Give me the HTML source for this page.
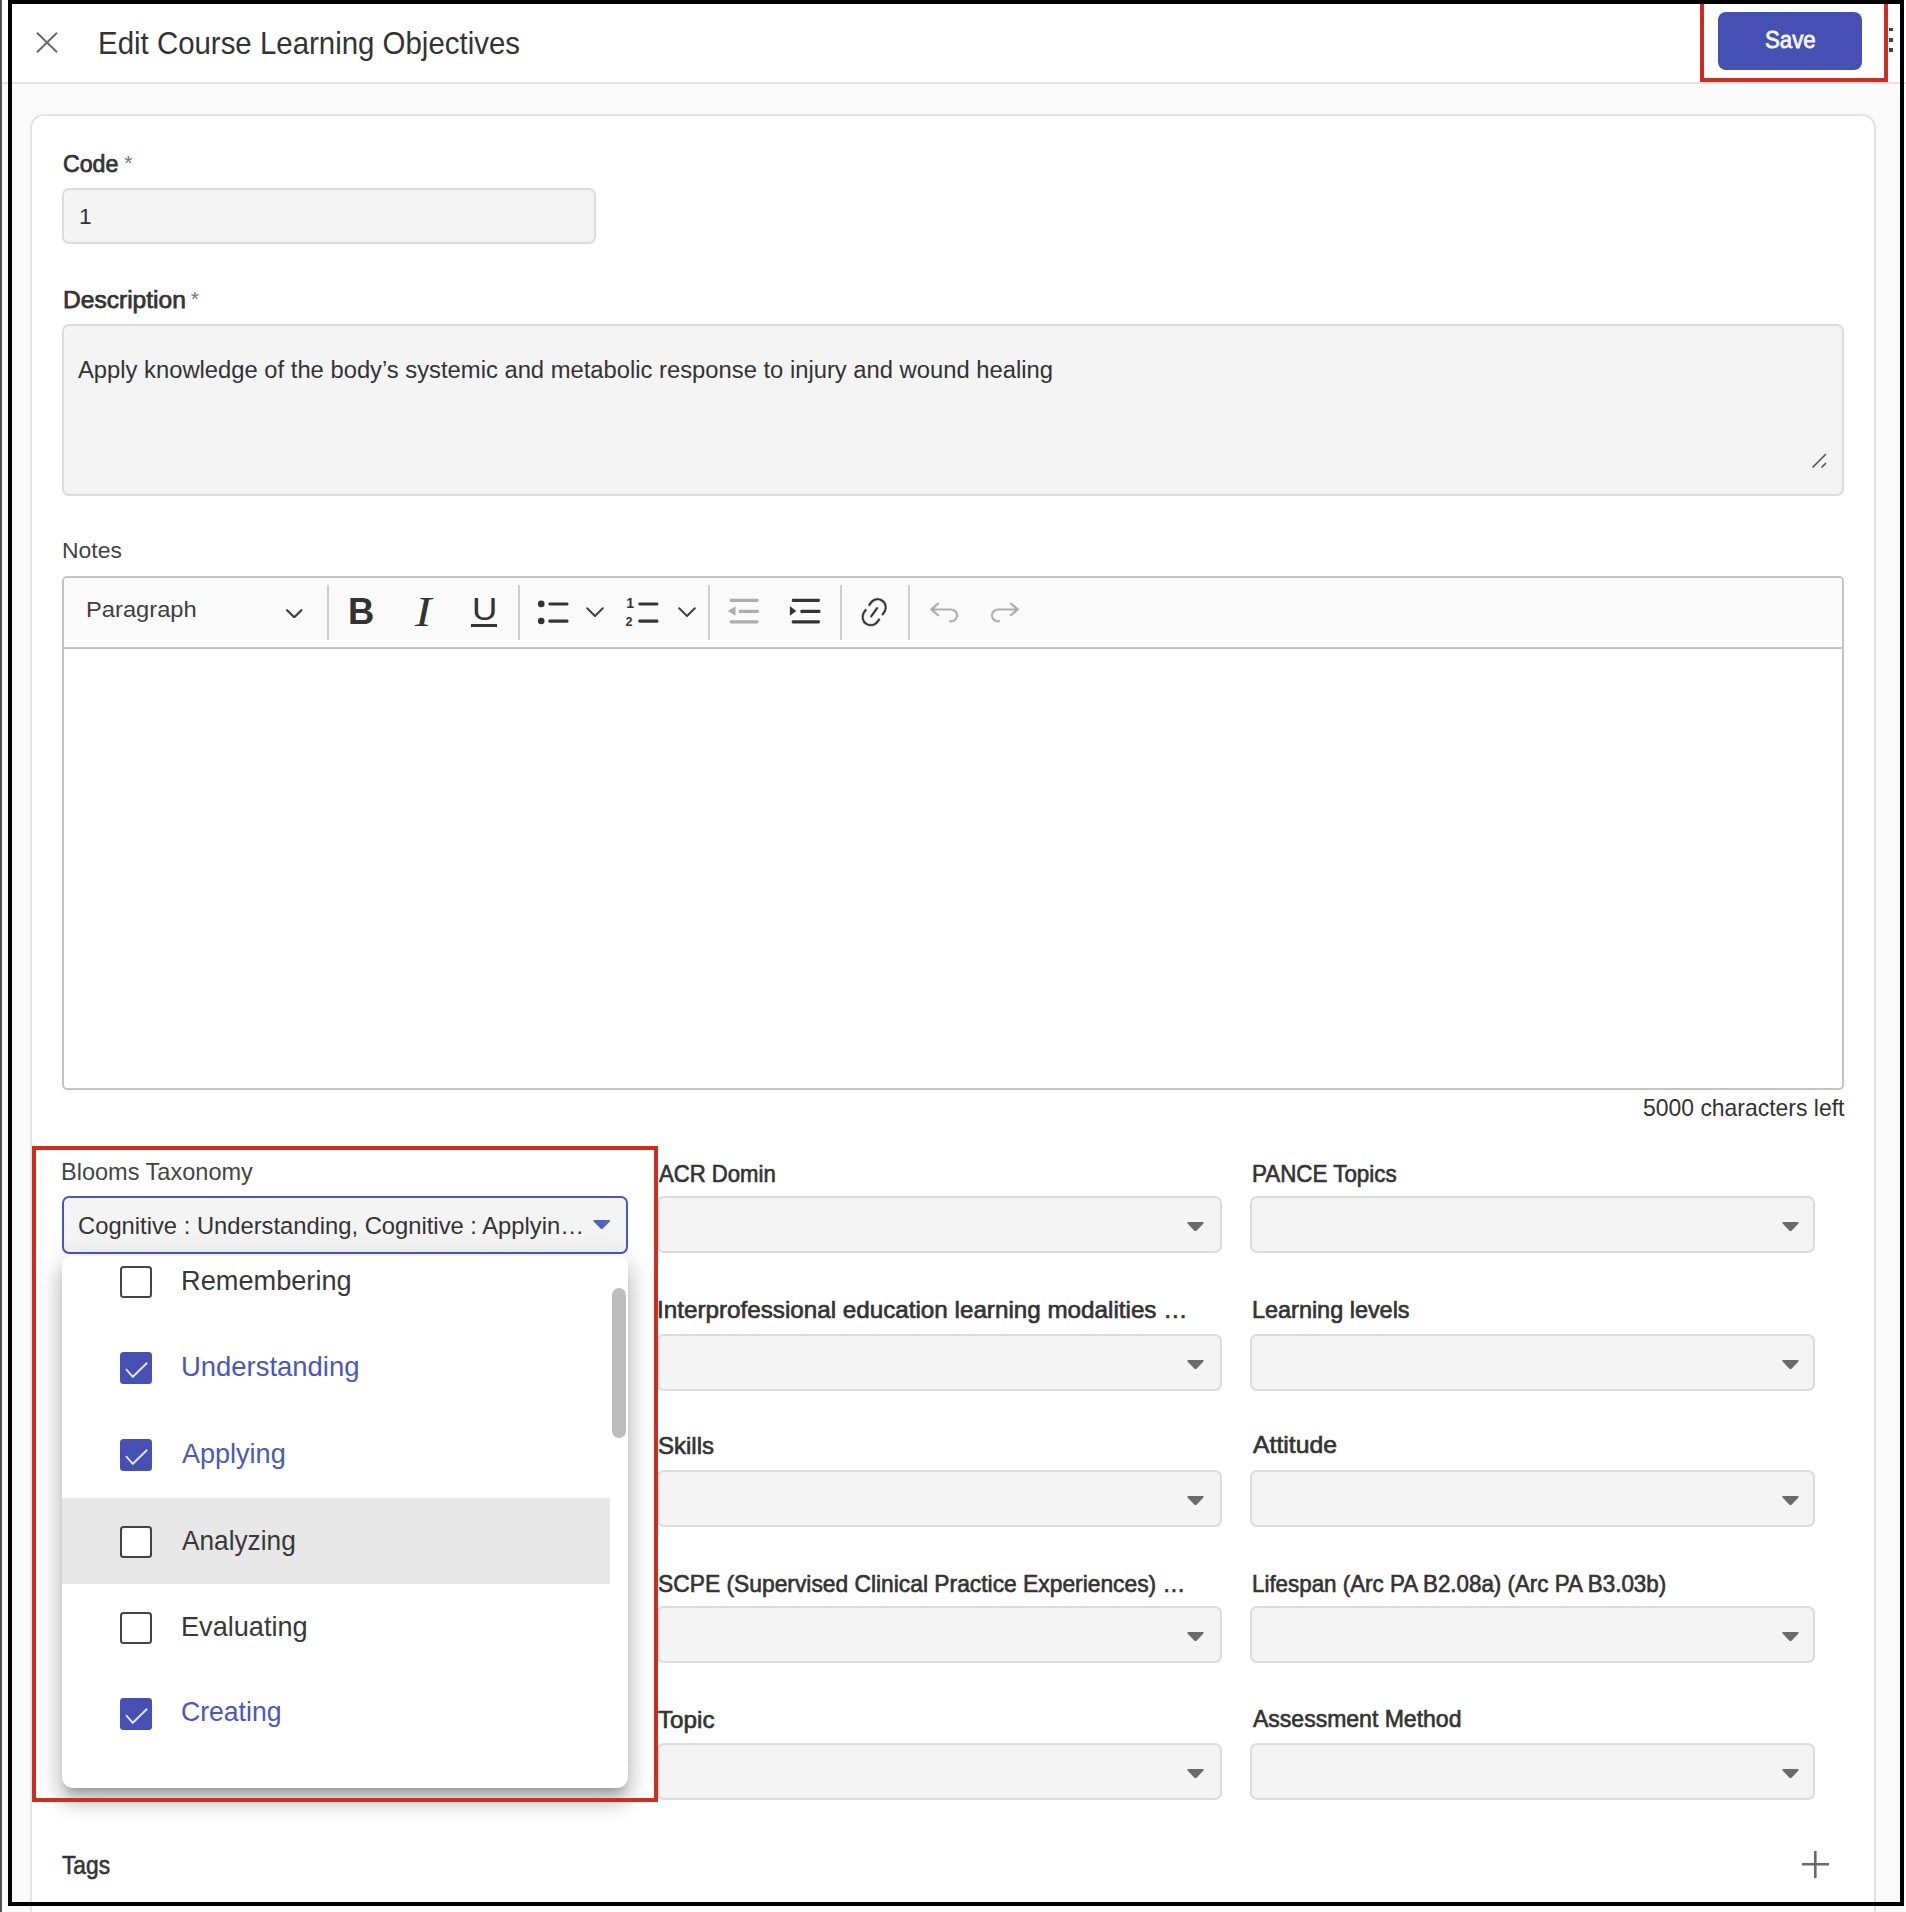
<!DOCTYPE html>
<html lang="en">
<head>
<meta charset="utf-8">
<title>Edit Course Learning Objectives</title>
<style>
html,body{margin:0;padding:0}
body{width:1906px;height:1912px;position:relative;overflow:hidden;background:#fff;font-family:"Liberation Sans", Arial, sans-serif;color:#333}
.abs,.t,.ic,.sep,.sel,.arr,.cb,.hl{position:absolute}
.t{white-space:nowrap;line-height:1;display:block;transform-origin:0 0}
.strip{left:0;top:0;width:2.5px;height:1912px;background:linear-gradient(90deg,#4a4a4a,#6a6a6a)}
.header{left:2px;top:0;width:1904px;height:81.5px;background:#fff;border-bottom:2px solid #e3e3e3}
.content{left:2px;top:83.5px;width:1904px;height:1829px;background:#fafafa}
.card{left:30px;top:114px;width:1842px;height:1900px;background:#fff;border:2px solid #e3e3e3;border-radius:14px}
.btn{left:1718px;top:12px;width:144px;height:58px;background:#4650b2;border-radius:8px}
.dot{width:3.5px;height:3.5px;background:#444;left:1889.4px}
.inp{background:#f4f4f4;border:2px solid #dcdcdc;border-radius:7px;box-sizing:border-box}
.editor{left:62px;top:576px;width:1782px;height:514px;box-sizing:border-box;border:2px solid #c4c4c4;border-radius:5px;background:#fff}
.toolbar{left:0;top:0;width:1778px;height:68.5px;background:#fafafa;border-bottom:2px solid #c4c4c4;border-radius:3px 3px 0 0}
.ic{fill:#333}
.ic.dis{fill:#333;opacity:.38}
.ic.thin{stroke:#fafafa;stroke-width:.35px;paint-order:fill stroke}
.sep{top:584.5px;width:2px;height:55px;background:#cfcfcf}
.sel{width:565px;height:57px;background:#f4f4f4;border:2px solid #dcdcdc;border-radius:7px;box-sizing:border-box}
.arr{fill:#6a6a6a}
.sel.focus{left:62px;top:1196px;width:566px;height:58px;border:2px solid #4a58be;border-radius:7px}
.panel{left:62px;top:1256px;width:566px;height:532px;background:#fff;border-radius:9px 9px 11px 11px;overflow:hidden;
 box-shadow:0 9px 10px -5px rgba(0,0,0,.22),0 15px 19px 2px rgba(0,0,0,.15),0 6px 27px 4px rgba(0,0,0,.13)}
.panelshadow{left:62px;top:1256px;width:566px;height:532px;border-radius:9px 9px 11px 11px}
.hl{left:0;width:548px;height:85.5px;background:#e7e7e7}
.cb{left:58px;width:32px;height:32px;box-sizing:border-box;border:2px solid #444;border-radius:3.5px;background:#fff}
.cb.on{border:0;background:#4650b2}
.cb svg{display:block}
.thumb{left:550px;top:31.5px;width:14px;height:150px;border-radius:7px;background:#bdbdbd}
.red{border:4px solid #d32b1f;box-sizing:border-box}
.frame{left:8px;top:0;width:1896px;height:1906px;box-sizing:border-box;border:4px solid #000}
</style>
</head>
<body>
<div class="abs strip"></div>
<header class="abs header"></header>
<main class="abs content"></main>
<section class="abs card"></section>

<!-- header -->
<svg class="abs" style="left:34px;top:29px" width="26" height="26" viewBox="0 0 26 26"><path d="M3 3.8L23 23.3M23 3.8L3 23.3" stroke="#666" stroke-width="1.9" fill="none"/></svg>
<span class="t" style="left:97.8px;top:27.9px;font-size:31.2px;transform:scaleX(0.9435);">Edit Course Learning Objectives</span>
<div class="abs btn"></div><span class="t" style="left:1765.4px;top:27.7px;font-size:24.6px;color:#f4f5fc;transform:scaleX(0.9043);-webkit-text-stroke:0.8px currentColor;">Save</span>
<i class="abs dot" style="top:27.6px"></i><i class="abs dot" style="top:38px"></i><i class="abs dot" style="top:48.2px"></i>

<!-- code -->
<span class="t" style="left:63.1px;top:151.7px;font-size:24.2px;transform:scaleX(0.9581);-webkit-text-stroke:0.75px currentColor;">Code</span><span class="t" style="left:124.3px;top:151.6px;font-size:21px;color:#777;">*</span>
<div class="abs inp" style="left:62px;top:188px;width:534px;height:56px"></div><span class="t" style="left:79.1px;top:206.2px;font-size:22.6px;">1</span>

<!-- description -->
<span class="t" style="left:62.6px;top:287.7px;font-size:24.2px;transform:scaleX(1.0158);-webkit-text-stroke:0.75px currentColor;">Description</span><span class="t" style="left:190.8px;top:287.6px;font-size:21px;color:#777;">*</span>
<div class="abs inp" style="left:62px;top:324px;width:1782px;height:171.6px"></div><span class="t" style="left:78.2px;top:359.1px;font-size:23.5px;transform:scaleX(1.0117);">Apply knowledge of the body’s systemic and metabolic response to injury and wound healing</span>
<svg class="abs" style="left:1810px;top:451px" width="18" height="19" viewBox="0 0 18 19"><path d="M2.5 16.5L16 3M11.5 16.5L16 12" stroke="#555" stroke-width="1.7" fill="none"/></svg>

<!-- notes -->
<span class="t" style="left:62.3px;top:540.2px;font-size:22.2px;color:#444;transform:scaleX(1.0335);">Notes</span>
<div class="abs editor"><div class="abs toolbar"></div></div>
<span class="t" style="left:85.9px;top:599.3px;font-size:22.4px;color:#404040;transform:scaleX(1.0584);">Paragraph</span>
<svg class="abs" style="left:286.3px;top:608.8px" width="16.5" height="9.6" viewBox="0 0 18 10.5"><path d="M1.2 1.3L9 9 16.8 1.3" fill="none" stroke="#404040" stroke-width="2.5" stroke-linecap="round" stroke-linejoin="round"/></svg>
<i class="sep" style="left:326.5px"></i>
<span class="t" style="left:348.2px;top:593.2px;font-size:37.8px;font-weight:700;transform:scaleX(0.9631);">B</span><span class="t" style="left:415.0px;top:590.1px;font-size:43px;font-family:'Liberation Serif','DejaVu Serif',serif;font-style:italic;transform:scaleX(1.15);">I</span><span class="t" style="left:471.9px;top:594.1px;font-size:31px;transform:scaleX(1.1302);">U</span><i class="abs" style="left:470.7px;top:624.3px;width:26.4px;height:2.9px;background:#333"></i>
<i class="sep" style="left:518.4px"></i>
<svg class="ic" style="left:535.8px;top:593px" width="38" height="38" viewBox="0 0 20 20"><circle cx="2.75" cy="5.75" r="1.75"/><circle cx="2.75" cy="14.75" r="1.75"/><rect x="6.5" y="5" width="10.6" height="1.6" rx=".75"/><rect x="6.5" y="14" width="10.6" height="1.6" rx=".75"/></svg>
<svg class="abs" style="left:585.8px;top:607px" width="18" height="10.5" viewBox="0 0 18 10.5"><path d="M1.2 1.3L9 9 16.8 1.3" fill="none" stroke="#404040" stroke-width="2.0" stroke-linecap="round" stroke-linejoin="round"/></svg>
<svg class="ic" style="left:624.8px;top:593px" width="38" height="38" viewBox="0 0 20 20"><rect x="7" y="5" width="10.6" height="1.6" rx=".75"/><rect x="7" y="14" width="10.6" height="1.6" rx=".75"/><text x="0.6" y="8" font-size="7.4" font-weight="700" font-family="Liberation Sans, Arial, sans-serif">1</text><text x="0.2" y="17.6" font-size="6.6" font-weight="700" font-family="Liberation Sans, Arial, sans-serif">2</text></svg>
<svg class="abs" style="left:678px;top:607px" width="18" height="10.5" viewBox="0 0 18 10.5"><path d="M1.2 1.3L9 9 16.8 1.3" fill="none" stroke="#404040" stroke-width="2.0" stroke-linecap="round" stroke-linejoin="round"/></svg>
<i class="sep" style="left:708.3px"></i>
<svg class="ic dis" style="left:725.8px;top:593px" width="38" height="38" viewBox="0 0 20 20"><rect x="2" y="3" width="15.1" height="1.7" rx=".6"/><rect x="6.7" y="8.8" width="10.6" height="1.7" rx=".6"/><rect x="2" y="14.3" width="15.1" height="1.7" rx=".6"/><path d="M1 9.5L5 7v5z"/></svg>
<svg class="ic" style="left:788.2px;top:593px" width="38" height="38" viewBox="0 0 20 20"><rect x="2" y="3" width="14.8" height="1.7" rx=".6"/><rect x="6.5" y="8.8" width="10.6" height="1.7" rx=".6"/><rect x="2" y="14.3" width="14.8" height="1.7" rx=".6"/><path d="M4.4 9.5L1 7v5z"/></svg>
<i class="sep" style="left:840.3px"></i>
<svg class="ic thin" style="left:855.6px;top:594.3px" width="36.4" height="36.4" viewBox="0 0 20 20"><path d="m11.077 15 .991-1.416a.75.75 0 1 1 1.229.86l-1.148 1.64a.748.748 0 0 1-.217.206 5.251 5.251 0 0 1-8.503-5.955.741.741 0 0 1 .12-.274l1.147-1.639a.75.75 0 1 1 1.228.86L4.933 10.7l.006.003a3.75 3.75 0 0 0 6.132 4.294l.006.004zm5.494-5.335a.748.748 0 0 1-.12.274l-1.147 1.639a.75.75 0 1 1-1.228-.86l.86-1.23a3.75 3.75 0 0 0-6.144-4.301l-.86 1.229a.75.75 0 0 1-1.229-.86l1.148-1.64a.748.748 0 0 1 .217-.206 5.251 5.251 0 0 1 8.503 5.955zm-4.563-2.532a.75.75 0 0 1 .184 1.045l-3.155 4.505a.75.75 0 1 1-1.229-.86l3.155-4.506a.75.75 0 0 1 1.045-.184z"/></svg>
<i class="sep" style="left:908.2px"></i>
<svg class="ic dis thin" style="left:926px;top:594px" width="36" height="36" viewBox="0 0 20 20"><path d="m5.042 9.367 2.189 1.837a.75.75 0 0 1-.965 1.149l-3.788-3.18a.747.747 0 0 1-.21-.284.75.75 0 0 1 .17-.945L6.23 4.762a.75.75 0 1 1 .964 1.15L4.863 7.866h8.917A.75.75 0 0 1 14 7.9a4 4 0 1 1-1.477 7.718l.344-1.489a2.5 2.5 0 1 0 1.094-4.73l.008-.032H5.042z"/></svg><svg class="ic dis thin" style="left:986.8px;top:594px" width="36" height="36" viewBox="0 0 20 20"><path d="m14.958 9.367-2.189 1.837a.75.75 0 0 0 .965 1.149l3.788-3.18a.747.747 0 0 0 .21-.284.75.75 0 0 0-.17-.945L13.77 4.762a.75.75 0 1 0-.964 1.15l2.331 1.955H6.22A.75.75 0 0 0 6 7.9a4 4 0 1 0 1.477 7.718l-.344-1.489A2.5 2.5 0 1 1 6.039 9.4l-.008-.032h8.927z"/></svg>
<span class="t" style="left:1642.7px;top:1097.0px;font-size:23.2px;transform:scaleX(0.9889);">5000 characters left</span>

<!-- attribute selects -->
<span class="t" style="left:61.2px;top:1161.2px;font-size:23.4px;color:#444;transform:scaleX(1.0062);">Blooms Taxonomy</span>
<span class="t" style="left:658.7px;top:1162.3px;font-size:24px;transform:scaleX(0.9209);-webkit-text-stroke:0.65px currentColor;">ACR Domin</span><div class="sel" style="left:657px;top:1196px"></div><svg class="arr" style="left:1187.3px;top:1221.6px" width="17" height="9.5" viewBox="0 0 17 9.5"><path d="M1.2 0h14.6a.9.9 0 0 1 .65 1.5L9.3 9a1.1 1.1 0 0 1-1.6 0L.55 1.5A.9.9 0 0 1 1.2 0z"/></svg>
<span class="t" style="left:1252.1px;top:1161.8px;font-size:24px;transform:scaleX(0.9322);-webkit-text-stroke:0.65px currentColor;">PANCE Topics</span><div class="sel" style="left:1250px;top:1196px"></div><svg class="arr" style="left:1781.5px;top:1221.6px" width="17" height="9.5" viewBox="0 0 17 9.5"><path d="M1.2 0h14.6a.9.9 0 0 1 .65 1.5L9.3 9a1.1 1.1 0 0 1-1.6 0L.55 1.5A.9.9 0 0 1 1.2 0z"/></svg>
<span class="t" style="left:657.4px;top:1297.7px;font-size:24px;transform:scaleX(1.0091);-webkit-text-stroke:0.65px currentColor;">Interprofessional education learning modalities …</span><div class="sel" style="left:657px;top:1334px"></div><svg class="arr" style="left:1187.3px;top:1359.6px" width="17" height="9.5" viewBox="0 0 17 9.5"><path d="M1.2 0h14.6a.9.9 0 0 1 .65 1.5L9.3 9a1.1 1.1 0 0 1-1.6 0L.55 1.5A.9.9 0 0 1 1.2 0z"/></svg>
<span class="t" style="left:1252.0px;top:1297.6px;font-size:24px;transform:scaleX(0.9760);-webkit-text-stroke:0.65px currentColor;">Learning levels</span><div class="sel" style="left:1250px;top:1334px"></div><svg class="arr" style="left:1781.5px;top:1359.6px" width="17" height="9.5" viewBox="0 0 17 9.5"><path d="M1.2 0h14.6a.9.9 0 0 1 .65 1.5L9.3 9a1.1 1.1 0 0 1-1.6 0L.55 1.5A.9.9 0 0 1 1.2 0z"/></svg>
<span class="t" style="left:658.0px;top:1434.3px;font-size:24px;-webkit-text-stroke:0.65px currentColor;">Skills</span><div class="sel" style="left:657px;top:1470px"></div><svg class="arr" style="left:1187.3px;top:1495.6px" width="17" height="9.5" viewBox="0 0 17 9.5"><path d="M1.2 0h14.6a.9.9 0 0 1 .65 1.5L9.3 9a1.1 1.1 0 0 1-1.6 0L.55 1.5A.9.9 0 0 1 1.2 0z"/></svg>
<span class="t" style="left:1253.2px;top:1433.1px;font-size:24px;transform:scaleX(1.0314);-webkit-text-stroke:0.65px currentColor;">Attitude</span><div class="sel" style="left:1250px;top:1470px"></div><svg class="arr" style="left:1781.5px;top:1495.6px" width="17" height="9.5" viewBox="0 0 17 9.5"><path d="M1.2 0h14.6a.9.9 0 0 1 .65 1.5L9.3 9a1.1 1.1 0 0 1-1.6 0L.55 1.5A.9.9 0 0 1 1.2 0z"/></svg>
<span class="t" style="left:658.1px;top:1571.7px;font-size:24px;transform:scaleX(0.9504);-webkit-text-stroke:0.65px currentColor;">SCPE (Supervised Clinical Practice Experiences) …</span><div class="sel" style="left:657px;top:1606px"></div><svg class="arr" style="left:1187.3px;top:1631.6px" width="17" height="9.5" viewBox="0 0 17 9.5"><path d="M1.2 0h14.6a.9.9 0 0 1 .65 1.5L9.3 9a1.1 1.1 0 0 1-1.6 0L.55 1.5A.9.9 0 0 1 1.2 0z"/></svg>
<span class="t" style="left:1252.1px;top:1571.7px;font-size:24px;transform:scaleX(0.9313);-webkit-text-stroke:0.65px currentColor;">Lifespan (Arc PA B2.08a) (Arc PA B3.03b)</span><div class="sel" style="left:1250px;top:1606px"></div><svg class="arr" style="left:1781.5px;top:1631.6px" width="17" height="9.5" viewBox="0 0 17 9.5"><path d="M1.2 0h14.6a.9.9 0 0 1 .65 1.5L9.3 9a1.1 1.1 0 0 1-1.6 0L.55 1.5A.9.9 0 0 1 1.2 0z"/></svg>
<span class="t" style="left:658.4px;top:1707.7px;font-size:24px;transform:scaleX(1.0099);-webkit-text-stroke:0.65px currentColor;">Topic</span><div class="sel" style="left:657px;top:1743px"></div><svg class="arr" style="left:1187.3px;top:1768.6px" width="17" height="9.5" viewBox="0 0 17 9.5"><path d="M1.2 0h14.6a.9.9 0 0 1 .65 1.5L9.3 9a1.1 1.1 0 0 1-1.6 0L.55 1.5A.9.9 0 0 1 1.2 0z"/></svg>
<span class="t" style="left:1253.2px;top:1707.2px;font-size:24px;transform:scaleX(0.9586);-webkit-text-stroke:0.65px currentColor;">Assessment Method</span><div class="sel" style="left:1250px;top:1743px"></div><svg class="arr" style="left:1781.5px;top:1768.6px" width="17" height="9.5" viewBox="0 0 17 9.5"><path d="M1.2 0h14.6a.9.9 0 0 1 .65 1.5L9.3 9a1.1 1.1 0 0 1-1.6 0L.55 1.5A.9.9 0 0 1 1.2 0z"/></svg>

<div class="abs sel focus"></div>
<span class="t" style="left:78.4px;top:1213.7px;font-size:24.3px;transform:scaleX(0.9781);">Cognitive : Understanding, Cognitive : Applyin…</span>
<svg class="abs" style="left:592.6px;top:1220.2px;fill:#5361c0" width="17.4" height="9.3" viewBox="0 0 17 10" preserveAspectRatio="none"><path d="M1.2 0h14.6a.9.9 0 0 1 .65 1.5L9.3 9.4a1.1 1.1 0 0 1-1.6 0L.55 1.5A.9.9 0 0 1 1.2 0z"/></svg>

<!-- open dropdown -->
<div class="abs panel">
<div class="cb" style="top:10.0px"></div><div class="cb on" style="top:95.7px"><svg width="32" height="32" viewBox="0 0 32 32"><path d="M6 17.2L12.8 24.8 27.2 10.8" fill="none" stroke="#e4e6f6" stroke-width="1.9"/></svg></div><div class="cb on" style="top:183.0px"><svg width="32" height="32" viewBox="0 0 32 32"><path d="M6 17.2L12.8 24.8 27.2 10.8" fill="none" stroke="#e4e6f6" stroke-width="1.9"/></svg></div><div class="hl" style="top:242px"></div><div class="cb" style="top:269.5px"></div><div class="cb" style="top:355.5px"></div><div class="cb on" style="top:442.0px"><svg width="32" height="32" viewBox="0 0 32 32"><path d="M6 17.2L12.8 24.8 27.2 10.8" fill="none" stroke="#e4e6f6" stroke-width="1.9"/></svg></div><span class="t" style="left:118.7px;top:11.2px;font-size:28px;color:#383838;transform:scaleX(0.9706);">Remembering</span><span class="t" style="left:118.7px;top:97.0px;font-size:28px;color:#4a58be;transform:scaleX(0.9800);">Understanding</span><span class="t" style="left:120.0px;top:184.2px;font-size:28px;color:#4a58be;transform:scaleX(0.9654);">Applying</span><span class="t" style="left:120.0px;top:271.0px;font-size:28px;color:#383838;transform:scaleX(0.9369);">Analyzing</span><span class="t" style="left:118.7px;top:356.6px;font-size:28px;color:#383838;transform:scaleX(0.9687);">Evaluating</span><span class="t" style="left:119.2px;top:442.4px;font-size:28px;color:#4a58be;transform:scaleX(0.9492);">Creating</span>
<i class="abs thumb"></i>
</div>

<!-- tags -->
<span class="t" style="left:61.9px;top:1852.7px;font-size:25px;transform:scaleX(0.9095);-webkit-text-stroke:0.55px currentColor;">Tags</span>
<svg class="abs" style="left:1801px;top:1849.5px" width="29" height="29" viewBox="0 0 29 29"><path d="M14.3 1v27M1 14.3h27" stroke="#6a6a6a" stroke-width="2.6" fill="none"/></svg>

<!-- annotations -->
<div class="abs red" style="left:1700px;top:-2px;width:188px;height:84px"></div>
<div class="abs red" style="left:32px;top:1146px;width:626px;height:656px"></div>
<div class="abs frame"></div>
</body>
</html>
